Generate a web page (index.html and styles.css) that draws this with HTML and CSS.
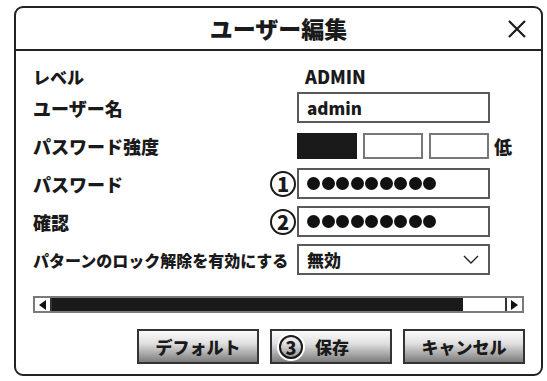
FILE: index.html
```html
<!DOCTYPE html>
<html lang="ja">
<head>
  <meta charset="UTF-8" />
  <meta name="viewport" content="width=device-width, initial-scale=1.0"/>
  <title>ユーザー編集</title>
  <link rel="stylesheet" href="styles.css">
</head>
<body>
  <div class="dialog">
    <div class="dialog-head">
      <span></span>
      <h1 class="title">ユーザー編集</h1>
      <button class="close" aria-label="閉じる">
        <svg width="18" height="18" viewBox="0 0 18 18"><path d="M1 1 L17 17 M17 1 L1 17" stroke="#1a1a1a" stroke-width="2.2" fill="none"/></svg>
      </button>
    </div>

    <div class="dialog-body">
      <div class="row row-level">
        <span class="label">レベル</span>
        <span class="value">ADMIN</span>
      </div>
      <div class="row">
        <span class="label">ユーザー名</span>
        <div class="field">admin</div>
      </div>
      <div class="row">
        <span class="label">パスワード強度</span>
        <div class="strength"><i class="on"></i><i></i><i></i></div>
        <span class="extra">低</span>
      </div>
      <div class="row">
        <span class="label">パスワード</span>
        <span class="num">1</span>
        <div class="field dots"><i></i><i></i><i></i><i></i><i></i><i></i><i></i><i></i><i></i></div>
      </div>
      <div class="row">
        <span class="label">確認</span>
        <span class="num">2</span>
        <div class="field dots"><i></i><i></i><i></i><i></i><i></i><i></i><i></i><i></i><i></i></div>
      </div>
      <div class="row">
        <span class="label label-small">パターンのロック解除を有効にする</span>
        <div class="field select">
          <span>無効</span>
          <svg width="16" height="9" viewBox="0 0 16 9"><path d="M1 1 L8 8 L15 1" stroke="#222" stroke-width="1.4" fill="none"/></svg>
        </div>
      </div>

      <div class="scrollbar">
        <span class="arrow left"></span>
        <span class="thumb"></span>
        <span class="track"></span>
        <span class="arrow right"></span>
      </div>

      <div class="actions">
        <button class="btn">デフォルト</button>
        <button class="btn btn-save"><span class="num num-btn">3</span>保存</button>
        <button class="btn">キャンセル</button>
      </div>
    </div>
  </div>
</body>
</html>
```

FILE: styles.css
```css
body {
  margin: 0;
  background: #fff; color: #1a1a1a;
  font-family: "Noto Sans CJK JP", "Noto Sans", sans-serif;
  font-weight: 900;
}
.dialog {
  box-sizing: border-box;
  width: 529px; height: 370px;
  margin: 6px 0 0 14px;
  border: 2px solid #222; border-radius: 9px;
}
.dialog-head {
  display: grid; grid-template-columns: 1fr auto 1fr;
  align-items: center;
  height: 41px;
  border-bottom: 2px solid #222;
}
.title {
  margin: 0;
  font-size: 23px; font-weight: 900;
  line-height: 1;
}
.close {
  justify-self: end;
  margin-right: 15px; padding: 0;
  border: none; background: none;
  display: flex;
}
.dialog-body {
  padding: 12px 17px 0 17px;
}
.row {
  display: grid;
  grid-template-columns: 236px 28px 193px auto;
  align-items: center;
  height: 31px; margin-bottom: 7px;
  font-size: 18px;
}
.row-level { height: 22px; font-size: 17px; }
.label { grid-column: 1 / 3; grid-row: 1; }
.label-small { font-size: 16px; }
.value { grid-column: 3; grid-row: 1; padding-left: 8px; font-size: 18px; }
.field {
  grid-column: 3; grid-row: 1;
  box-sizing: border-box; height: 31px;
  border: 2px solid #5a5a5a;
  display: flex; align-items: center;
  padding-left: 8px;
  font-size: 17px;
}
.dots { gap: 1.5px; }
.dots i {
  width: 13px; height: 13px;
  border-radius: 50%; background: #111;
}
.select { justify-content: space-between; padding-right: 9px; }
.num {
  grid-column: 2; grid-row: 1;
  justify-self: start; margin-left: 1px;
  box-sizing: border-box;
  width: 26px; height: 26px;
  border: 2px solid #1a1a1a; border-radius: 50%;
  display: flex; align-items: center; justify-content: center;
  font-size: 20px; line-height: 1;
}
.strength {
  grid-column: 3; grid-row: 1;
  display: flex; gap: 6px;
}
.strength i {
  box-sizing: border-box;
  width: 60px; height: 26px;
  border: 2px solid #777;
}
.strength i.on { background: #1a1a1a; border-color: #1a1a1a; }
.extra { grid-column: 4; grid-row: 1; padding-left: 4px; }

.scrollbar {
  display: flex;
  box-sizing: border-box; height: 17px;
  margin-top: 21px;
  border: 2px solid #7a7a7a;
}
.arrow {
  width: 15px; background: #fff;
  display: flex; align-items: center; justify-content: center;
}
.arrow.left { border-right: 2px solid #333; }
.arrow.right { border-left: 2px solid #333; }
.arrow.left::before {
  content: ""; border: 5px solid transparent;
  border-right: 7px solid #111; border-left: 0;
}
.arrow.right::before {
  content: ""; border: 5px solid transparent;
  border-left: 7px solid #111; border-right: 0;
}
.thumb { width: 411px; background: #1a1a1a; }
.track { flex: 1; background: #fff; }

.actions {
  display: flex; justify-content: flex-end;
  gap: 11px; margin-top: 16px; margin-right: -1px;
}
.btn {
  box-sizing: border-box;
  width: 122px; height: 35px;
  border: 2px solid #333;
  background: linear-gradient(#fbfbfb, #e0e0e0 40%, #7c7c7c);
  font-family: inherit; font-weight: 900;
  font-size: 17px; color: #1a1a1a;
  display: flex; align-items: center; justify-content: center;
  padding: 0;
}
.btn-save { justify-content: flex-start; padding-left: 7px; gap: 12px; }
.num-btn {
  margin: 0;
  width: 24px; height: 24px;
  font-size: 18px;
  box-shadow: 0 0 0 2px #fff;
}
```
